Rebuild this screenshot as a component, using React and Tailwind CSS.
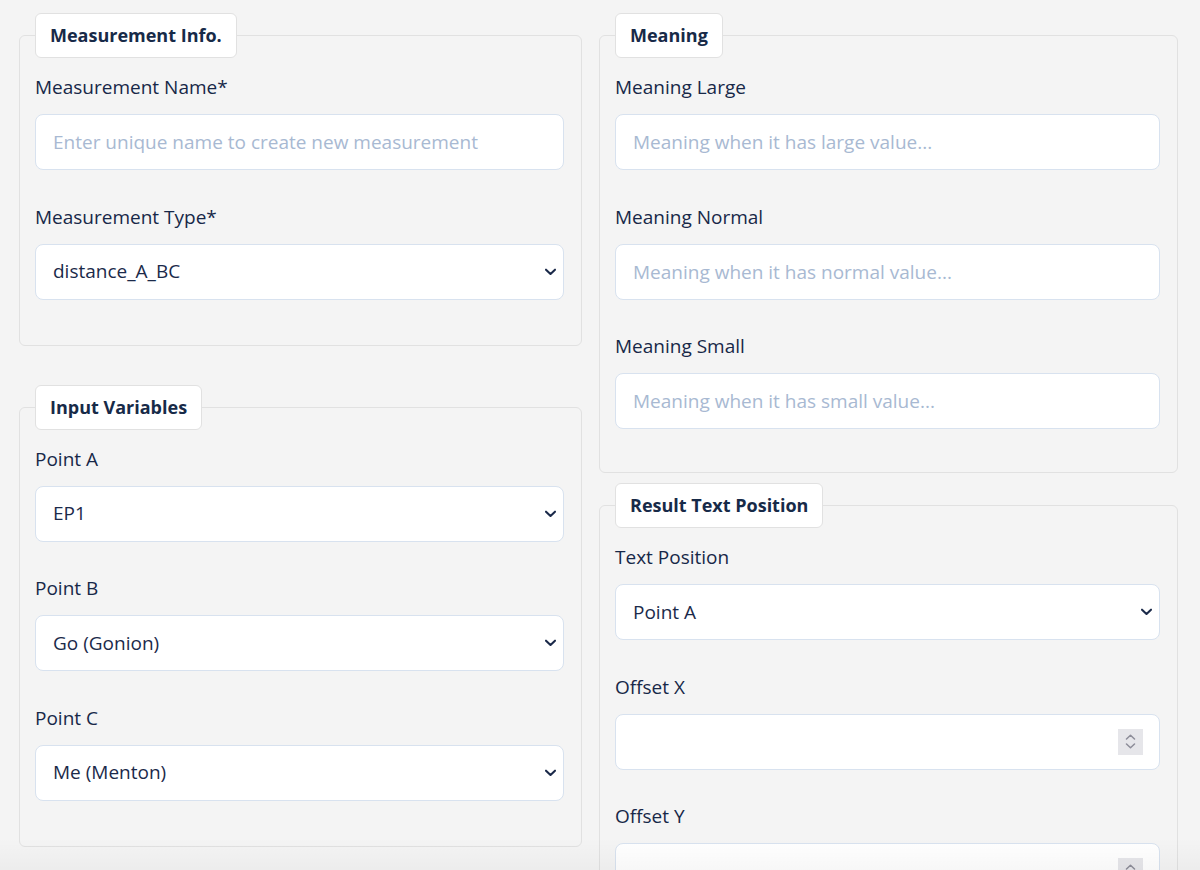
import React from "react";

const FONT = { fontFamily: "'Open Sans', 'Noto Sans', sans-serif" };

function Chevron() {
  return (
    <svg className="pointer-events-none absolute right-[7px] top-1/2 -translate-y-1/2" width="13" height="9" viewBox="0 0 13 9" fill="none">
      <path d="M2 2.2 L6.5 6.5 L11 2.2" stroke="#1b2a4a" strokeWidth="2.1" strokeLinecap="round" strokeLinejoin="round" />
    </svg>
  );
}

function Spinner() {
  return (
    <div className="flex h-[26px] w-[25px] shrink-0 flex-col items-center justify-center gap-[3px] bg-[#e6e6ea]">
      <svg width="11" height="6" viewBox="0 0 11 6" fill="none">
        <path d="M1.5 5 L5.5 1.2 L9.5 5" stroke="#8d8d99" strokeWidth="1.5" strokeLinecap="round" strokeLinejoin="round" />
      </svg>
      <svg width="11" height="6" viewBox="0 0 11 6" fill="none">
        <path d="M1.5 1 L5.5 4.8 L9.5 1" stroke="#8d8d99" strokeWidth="1.5" strokeLinecap="round" strokeLinejoin="round" />
      </svg>
    </div>
  );
}

const inputCls =
  "h-[56px] w-full rounded-[8px] border border-[#d8e2ef] bg-white px-[17px] text-[19px] text-[#1b2a4a] outline-none placeholder:text-[#a8b9d2]";

function Label({ children }) {
  return <label className="mb-[13px] block text-[19px] leading-[27px] text-[#172848]">{children}</label>;
}

function TextField({ label, placeholder }) {
  return (
    <div>
      <Label>{label}</Label>
      <input className={inputCls} placeholder={placeholder} style={FONT} />
    </div>
  );
}

function SelectField({ label, value }) {
  return (
    <div>
      <Label>{label}</Label>
      <div className="relative">
        <select className={inputCls + " appearance-none"} defaultValue={value} style={FONT}>
          <option>{value}</option>
        </select>
        <Chevron />
      </div>
    </div>
  );
}

function NumberField({ label }) {
  return (
    <div>
      <Label>{label}</Label>
      <div className="flex h-[56px] w-full items-center rounded-[8px] border border-[#d8e2ef] bg-white pl-[17px] pr-[16px]">
        <input className="min-w-0 flex-1 bg-transparent text-[19px] text-[#1b2a4a] outline-none" style={FONT} />
        <Spinner />
      </div>
    </div>
  );
}

function Panel({ title, children, pb = "pb-[45px]" }) {
  return (
    <fieldset className={"min-w-0 rounded-[6px] border border-[#e1e1e1] pl-[15px] pr-[17px] " + pb}>
      <legend className="h-[45px] rounded-[6px] border border-[#e1e1e1] bg-white px-[14px] text-[18px] font-bold leading-[43px] text-[#172a48]">
        {title}
      </legend>
      <div className="flex flex-col gap-[33.5px] pt-[16px]">{children}</div>
    </fieldset>
  );
}

export default function App() {
  return (
    <div className="relative h-[870px] overflow-hidden bg-[#f4f4f4]" style={FONT}>
      <div className="grid grid-cols-[563px_579px] gap-x-[17px] pl-[19px] pt-[13px]">
        <div className="flex flex-col gap-[39px]">
          <Panel title="Measurement Info.">
            <TextField label="Measurement Name*" placeholder="Enter unique name to create new measurement" />
            <SelectField label="Measurement Type*" value="distance_A_BC" />
          </Panel>
          <Panel title="Input Variables">
            <SelectField label="Point A" value="EP1" />
            <SelectField label="Point B" value="Go (Gonion)" />
            <SelectField label="Point C" value="Me (Menton)" />
          </Panel>
        </div>
        <div className="flex flex-col gap-[10px]">
          <Panel title="Meaning" pb="pb-[43px]">
            <TextField label="Meaning Large" placeholder="Meaning when it has large value..." />
            <TextField label="Meaning Normal" placeholder="Meaning when it has normal value..." />
            <TextField label="Meaning Small" placeholder="Meaning when it has small value..." />
          </Panel>
          <Panel title="Result Text Position">
            <SelectField label="Text Position" value="Point A" />
            <NumberField label="Offset X" />
            <NumberField label="Offset Y" />
          </Panel>
        </div>
      </div>
      <div className="pointer-events-none absolute inset-x-0 bottom-0 h-[32px] bg-gradient-to-b from-transparent to-black/[0.03]" />
    </div>
  );
}
